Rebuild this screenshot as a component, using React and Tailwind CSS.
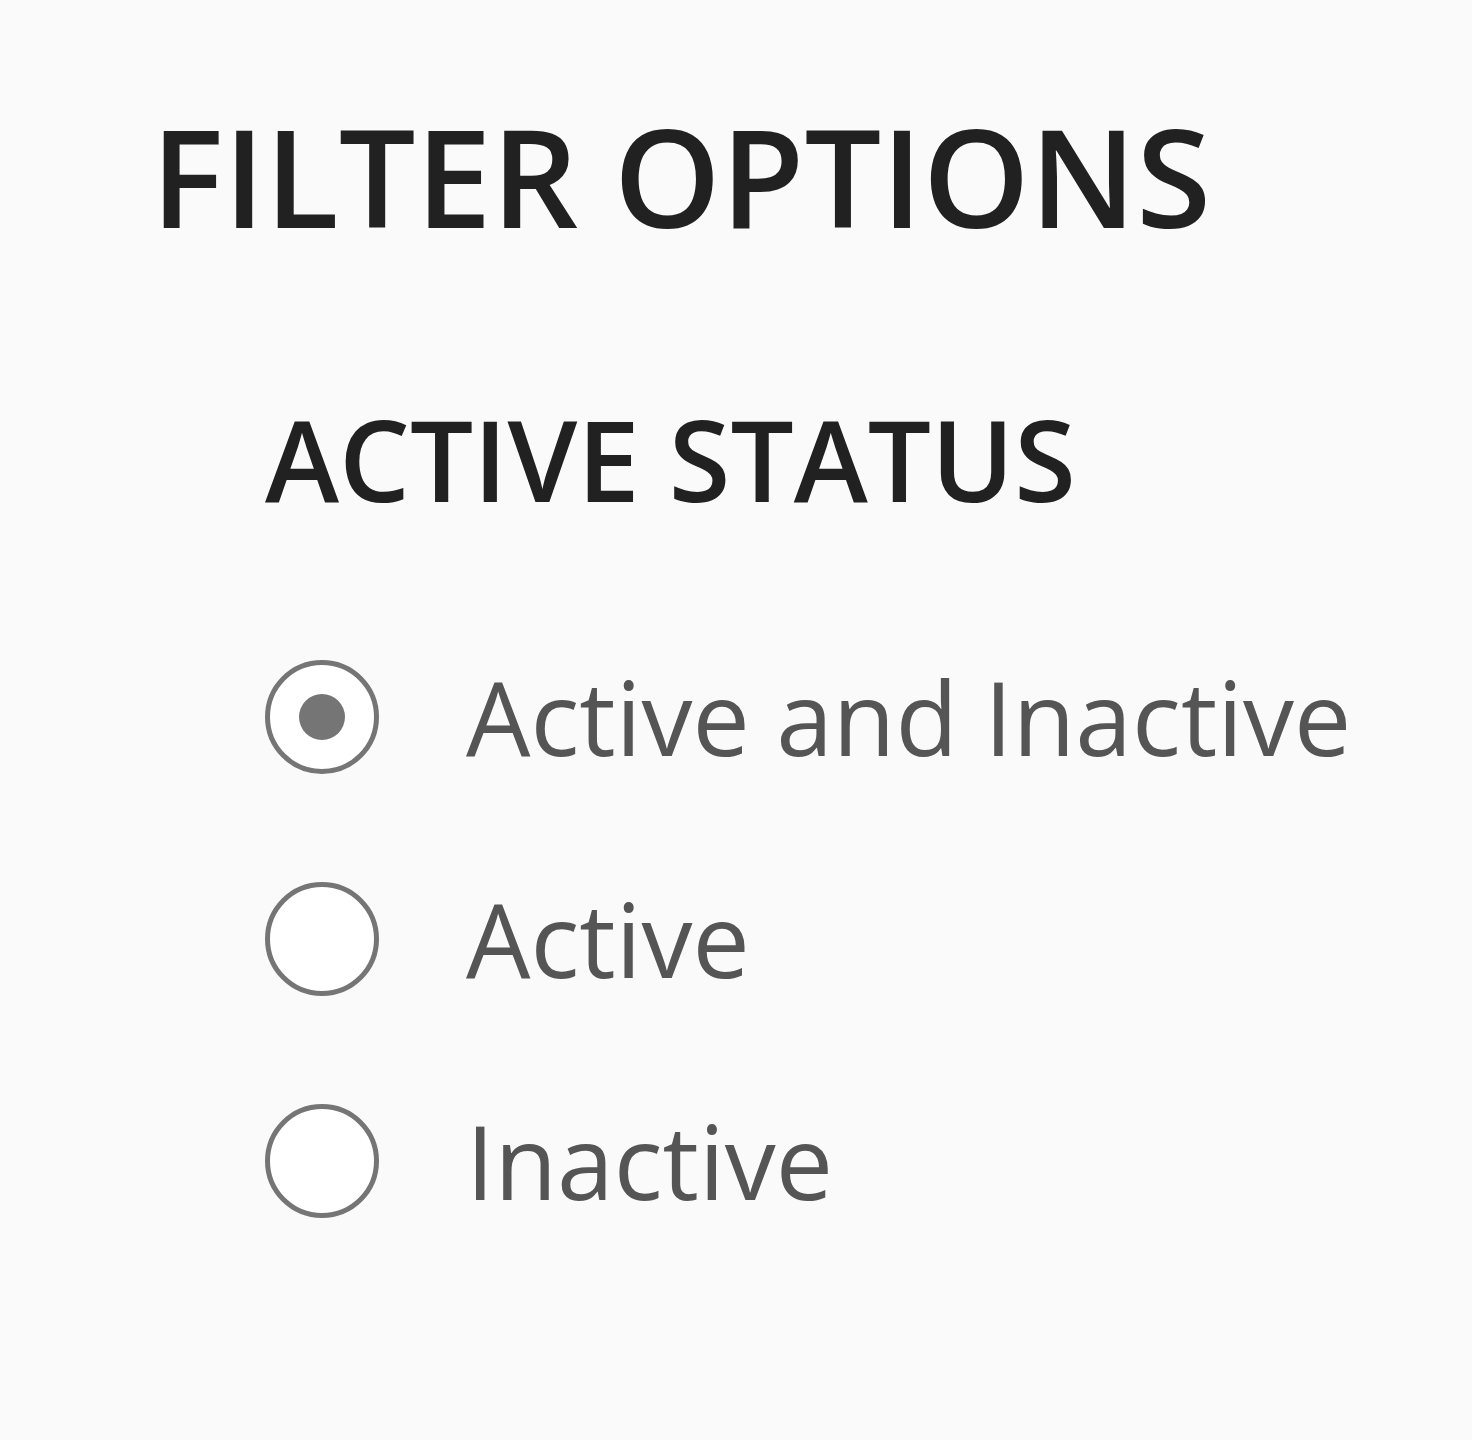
import { useState } from 'react'

const options = ['Active and Inactive', 'Active', 'Inactive']

function Radio({ checked }) {
  return (
    <span className="flex h-[114px] w-[114px] flex-shrink-0 items-center justify-center rounded-full border-[5px] border-[#757575] bg-white">
      {checked && <span className="h-[46px] w-[46px] rounded-full bg-[#757575]" />}
    </span>
  )
}

export default function App() {
  const [value, setValue] = useState('Active and Inactive')

  return (
    <div className="min-h-[1440px] w-full bg-[#fafafa] pl-[151px] pt-[96px] font-['Open_Sans',sans-serif]">
      <h1 className="text-[136px] font-semibold leading-[160px] text-[#212121]">FILTER OPTIONS</h1>

      <div className="pl-[114px] pt-[138px]">
        <h2 className="text-[112px] font-semibold leading-[130px] text-[#212121]">ACTIVE STATUS</h2>

        <div className="mt-[136px] flex flex-col gap-[108px]">
          {options.map(opt => (
            <label
              key={opt}
              className="flex cursor-pointer items-center gap-[87px]"
              onClick={() => setValue(opt)}
            >
              <Radio checked={value === opt} />
              <span className="text-[102px] leading-[114px] text-[#555555]">{opt}</span>
            </label>
          ))}
        </div>
      </div>
    </div>
  )
}
